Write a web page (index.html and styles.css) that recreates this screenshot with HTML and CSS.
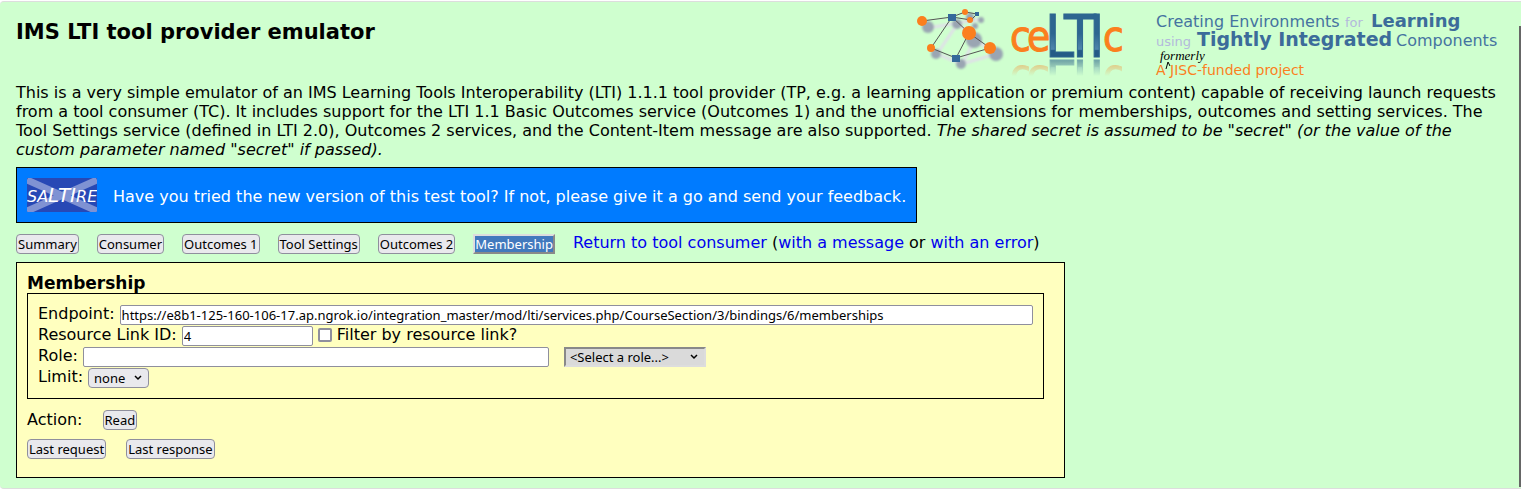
FILE: index.html
```html
<!DOCTYPE html>
<html lang="en">
  <head>
    <meta charset="UTF-8" />
    <meta name="viewport" content="width=device-width, initial-scale=1.0" />
    <title>IMS LTI tool provider emulator</title>
    <link rel="stylesheet" href="styles.css">
  </head>
  <body>
    <div class="page">
      <header class="header">
        <h1>IMS LTI tool provider emulator</h1>
        <svg class="logo" width="588" height="80" viewBox="0 0 588 80" role="img" aria-label="ceLTIc project">
          <defs>
            <linearGradient id="fade" x1="0" y1="0" x2="0" y2="1">
              <stop offset="0" stop-color="#fff" stop-opacity="0.6" />
              <stop offset="1" stop-color="#fff" stop-opacity="0" />
            </linearGradient>
            <linearGradient id="blue" x1="0" y1="0" x2="0" y2="1">
              <stop offset="0.45" stop-color="#2d6690" />
              <stop offset="0.68" stop-color="#4f86ab" />
              <stop offset="0.7" stop-color="#245b86" />
            </linearGradient>
            <filter id="soft" x="-20%" y="-20%" width="140%" height="140%">
              <feGaussianBlur stdDeviation="1" />
            </filter>
            <mask id="mirror" maskUnits="userSpaceOnUse" x="90" y="57" width="120" height="17">
              <rect x="90" y="57" width="120" height="17" fill="url(#fade)" />
            </mask>
          </defs>
          <!-- shadow of the network -->
          <g filter="url(#soft)">
            <path d="M11 26 41 21 65 17 M41 21 20 52 45 62 79 52 58 38 45 62 M41 21 58 38" fill="none" stroke="#dfdfe8" stroke-width="3" />
            <g fill="#9aa5b2">
              <circle cx="11" cy="25" r="6" />
              <circle cx="40" cy="22" r="5" />
              <circle cx="53" cy="15" r="4" />
              <circle cx="64" cy="18" r="3" />
              <circle cx="58" cy="24" r="3" />
              <circle cx="57" cy="38" r="8" />
              <circle cx="19" cy="52" r="5" />
              <circle cx="44" cy="62" r="5" />
              <circle cx="79" cy="52" r="7" />
            </g>
          </g>
          <path d="M5 19 35 15 48 10 60 12 54 18 35 15 52 31 73 46 39 56 14 46 35 15 M52 31 39 56" fill="none" stroke="#555" stroke-width="1" />
          <g fill="#fb7f1e">
            <circle cx="5" cy="19" r="5" />
            <circle cx="48" cy="10" r="3" />
            <circle cx="53" cy="18" r="3" />
            <circle cx="52" cy="31" r="7" />
            <circle cx="14" cy="46" r="4" />
            <circle cx="73" cy="46" r="6" />
          </g>
          <g fill="#34699a">
            <rect x="31" y="12" width="8" height="7" />
            <rect x="58" y="10" width="4" height="4" />
            <rect x="35" y="53" width="8" height="7" />
          </g>
          <g id="name" class="logo-name">
            <text class="logo-small" x="93 110" y="49">ce</text>
            <text class="logo-big" x="128 147 172" y="55">LTI</text>
            <text class="logo-small" x="186" y="49">c</text>
          </g>
          <g mask="url(#mirror)" aria-hidden="true">
            <use href="#name" transform="translate(0 113) scale(1 -1)" />
          </g>
          <text class="tag" x="239" y="25">Creating Environments</text>
          <text class="tag-light" x="428" y="25">for</text>
          <text class="tag-bold" x="454" y="25">Learning</text>
          <text class="tag-light" x="239" y="44">using</text>
          <text class="tag-bold tag-wide" x="280" y="44">Tightly Integrated</text>
          <text class="tag" x="479" y="44">Components</text>
          <text class="tag-script" x="243" y="58">formerly</text>
          <path d="M249 67 251 60 253 64" fill="none" stroke="#000" stroke-width="1" />
          <text class="tag-jisc" x="239" y="73">A JISC-funded project</text>
        </svg>
      </header>

      <p class="intro">
        This is a very simple emulator of an IMS Learning Tools Interoperability (LTI) 1.1.1 tool provider (TP, e.g. a learning application or premium content) capable of receiving launch requests from a tool consumer (TC). It includes support for the LTI 1.1 Basic Outcomes service (Outcomes 1) and the unofficial extensions for memberships, outcomes and setting services. The Tool Settings service (defined in LTI 2.0), Outcomes 2 services, and the Content-Item message are also supported. <em>The shared secret is assumed to be "secret" (or the value of the custom parameter named "secret" if passed).</em>
      </p>

      <a class="banner" href="#">
        <svg width="70" height="34" viewBox="0 0 70 34" role="img" aria-label="saLTIre">
          <rect width="70" height="34" fill="#2748b5" />
          <path d="M0 2 70 33 M70 2 0 33" stroke="#7f92d3" stroke-width="7" />
          <text class="saltire" y="24"><tspan>SA</tspan><tspan class="saltire-big">LTI</tspan><tspan>RE</tspan></text>
        </svg>
        <span>Have you tried the new version of this test tool? If not, please give it a go and send your feedback.</span>
      </a>

      <nav class="tabs">
        <button type="button">Summary</button>
        <button type="button">Consumer</button>
        <button type="button">Outcomes 1</button>
        <button type="button">Tool Settings</button>
        <button type="button">Outcomes 2</button>
        <button type="button" class="current">Membership</button>
        <span><a href="#">Return to tool consumer</a> (<a href="#">with a message</a> or <a href="#">with an error</a>)</span>
      </nav>

      <form class="panel">
        <h2>Membership</h2>
        <div class="fields">
          <div class="row">
            <label for="endpoint">Endpoint:</label>
            <input type="text" id="endpoint" class="endpoint" value="https://e8b1-125-160-106-17.ap.ngrok.io/integration_master/mod/lti/services.php/CourseSection/3/bindings/6/memberships">
          </div>
          <div class="row">
            <label for="rlid">Resource Link ID:</label>
            <input type="text" id="rlid" class="rlid" value="4">
            <input type="checkbox" id="filter">
            <label for="filter">Filter by resource link?</label>
          </div>
          <div class="row">
            <label for="role">Role:</label>
            <input type="text" id="role" class="role">
            <select class="role-list" aria-label="Select a role">
              <option>&lt;Select a role...&gt;</option>
            </select>
          </div>
          <div class="row">
            <label for="limit">Limit:</label>
            <select id="limit">
              <option>none</option>
            </select>
          </div>
        </div>
        <div class="actions">
          <span>Action:</span>
          <button type="button">Read</button>
        </div>
        <div class="actions">
          <button type="button">Last request</button>
          <button type="button">Last response</button>
        </div>
      </form>
    </div>
  </body>
</html>
```
FILE: styles.css
```css
* {
  box-sizing: border-box;
}

body {
  margin: 1px 0 0;
  background: #fff;
  color: #000;
  font: 16px/19px "DejaVu Sans", sans-serif;
}

.page {
  position: relative;
  padding: 0 16px 10px;
  background: #cfffcf;
  border: solid #ddd;
  border-width: 1px 0;
  border-radius: 4px 0 0 4px;
}

/* dark strip down the right edge */
.page::after {
  content: "";
  position: absolute;
  top: 24px;
  right: 0;
  bottom: 1px;
  width: 2px;
  background: #666;
}

a {
  color: #00e;
  text-decoration: none;
}

h1,
h2,
p {
  margin: 0;
}

/* Header */
.header {
  display: flex;
  justify-content: space-between;
  height: 81px;
}

h1 {
  padding-top: 17px;
  font-size: 21px;
  line-height: 26px;
}

.logo {
  flex: none;
}

.logo-name {
  font-family: "Liberation Sans Narrow", "DejaVu Sans Condensed", sans-serif;
}

.logo-small {
  font-size: 42px;
  fill: #fb7f1e;
  stroke: #fb7f1e;
}

.logo-big {
  font-size: 58px;
  fill: url(#blue);
  stroke: #2d6690;
}

.tag {
  font-size: 16px;
  fill: #4573a0;
}

.tag-light {
  font-size: 13px;
  fill: #b3b9dc;
}

.tag-bold {
  font-size: 18px;
  font-weight: bold;
  fill: #3c6c9a;
}

.tag-wide {
  font-size: 19px;
}

.tag-script {
  font: italic 13px "Liberation Serif", serif;
}

.tag-jisc {
  font-size: 14px;
  fill: #fb7f1e;
}

/* Banner */
.banner {
  display: flex;
  align-items: center;
  gap: 16px;
  width: fit-content;
  margin-top: 8px;
  padding: 10px;
  border: 1px solid #000;
  background: #007bff;
  color: #fff;
}

.banner span {
  padding-top: 2px;
}

.saltire {
  font-size: 16px;
  font-style: italic;
  fill: #fff;
}

.saltire-big {
  font-size: 20px;
}

/* Buttons and fields */
button,
input,
select {
  height: 20px;
  margin: 0;
  padding: 0 1px;
  border: 1px solid #8f8f9d;
  font: 13px/18px "Noto Sans", sans-serif;
  color: #000;
}

button {
  border-radius: 4px;
  background: #e9e9ed;
}

.tabs {
  display: flex;
  flex-wrap: wrap;
  gap: 18px;
  margin: 11px 0 8px;
}

.tabs span {
  line-height: 18px;
}

.current {
  border: 2px outset #ddd;
  border-radius: 0;
  background: #4279bd;
  color: #fff;
  line-height: 16px;
  padding: 0;
}

.panel {
  max-width: 1049px;
  padding: 10px 10px 18px;
  border: 1px solid #000;
  background: #ffffbf;
}

h2 {
  font-size: 17px;
  line-height: 20px;
}

.fields {
  margin: 0 10px 11px 0;
  padding: 10px;
  border: 1px solid #000;
}

.row {
  display: flex;
  align-items: flex-end;
  gap: 5px;
  height: 21px;
}

.row label {
  align-self: flex-start;
}

input {
  border-radius: 2px;
  background: #fff;
}

.endpoint {
  flex: 1;
  min-width: 0;
}

.rlid {
  width: 131px;
}

.role {
  width: 466px;
}

input[type="checkbox"] {
  appearance: none;
  width: 14px;
  height: 14px;
  margin-bottom: 4px;
  border: 2px solid #8f8f9d;
}

select {
  appearance: none;
  width: 61px;
  padding: 0 5px;
  border-radius: 4px;
  background: #e9e9ed url("data:image/svg+xml,%3Csvg xmlns='http://www.w3.org/2000/svg' width='8' height='6'%3E%3Cpath d='M1 1l3 3 3-3' fill='none' stroke='%23000' stroke-width='1.5'/%3E%3C/svg%3E") no-repeat right 6px center;
}

.role-list {
  width: 142px;
  margin-left: 10px;
  padding: 0 4px;
  border: 2px inset #ddd;
  border-radius: 0;
  background-color: #dadada;
  line-height: 16px;
}

.actions {
  display: flex;
  gap: 20px;
  margin-bottom: 9px;
}

.actions:last-child {
  margin-bottom: 0;
}
```
